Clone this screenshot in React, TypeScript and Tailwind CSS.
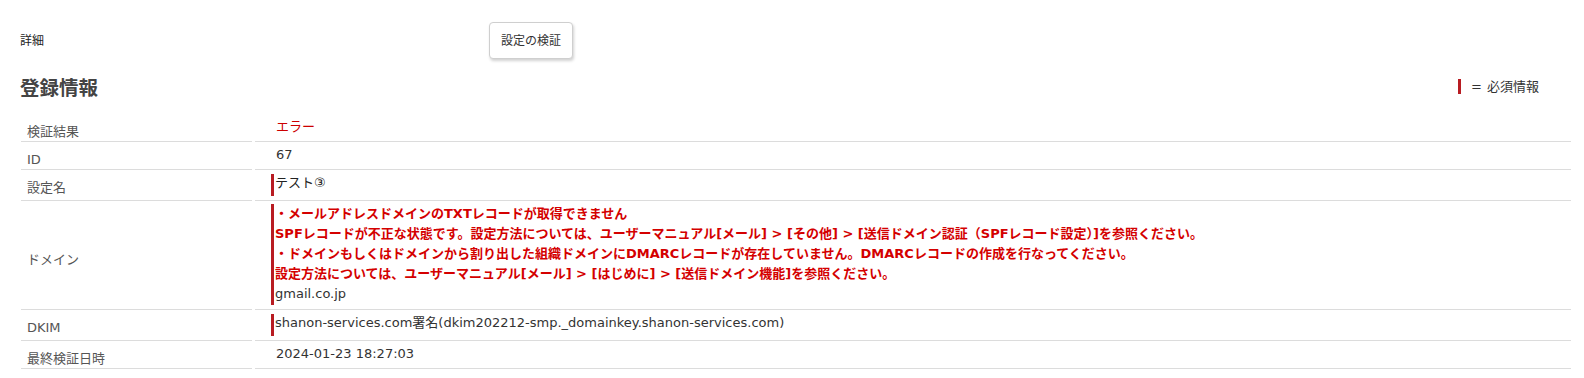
import React from "react";

const FONT = "font-['DejaVu_Sans','Noto_Sans_CJK_JP',sans-serif]";

function Row({
  label,
  children,
  center = false,
}: {
  label: string;
  children: React.ReactNode;
  center?: boolean;
}) {
  return (
    <>
      <div
        className={`border-b border-[#dcdcdc] pl-[6px] text-[#555] min-h-[28px] flex ${
          center ? "items-center" : "items-start"
        }`}
      >
        <div className="pt-[8px] leading-[19px]">{label}</div>
      </div>
      <div className="border-b border-[#dcdcdc] pl-[16px] pb-[4px] min-h-[28px] text-[#333]">
        {children}
      </div>
    </>
  );
}

function Plain({ children, className = "" }: { children: React.ReactNode; className?: string }) {
  return (
    <div className={`mt-[4px] border-l-[3px] border-transparent pl-[2px] leading-[18px] ${className}`}>
      {children}
    </div>
  );
}

function Req({ children }: { children: React.ReactNode }) {
  return (
    <div className="mt-[4px] border-l-[3px] border-[#b81c22] pl-[1px] leading-[18px]">
      {children}
    </div>
  );
}

export default function App() {
  return (
    <div className={`${FONT} text-[13px] bg-white w-[1584px] h-[378px] pl-[20px] pr-[13px]`}>
      {/* top row */}
      <div className="flex items-center pt-[22px]">
        <div className="w-[469px] text-[12px] text-[#222] leading-[16px]">詳細</div>
        <button className="h-[37px] px-[11px] bg-white border border-[#cfcfcf] rounded-[4px] shadow-[1px_2px_3px_rgba(0,0,0,0.18)] text-[12px] text-[#333]">
          設定の検証
        </button>
      </div>

      {/* heading row */}
      <div className="flex justify-between mt-[16px] h-[28px]">
        <h2 className="text-[19.5px] font-bold text-[#444] leading-[28px]">登録情報</h2>
        <div className="flex items-center self-start mt-[4px] pr-[32px] h-[15px] text-[13px] text-[#333] leading-[15px]">
          <span className="w-[3px] h-[15px] bg-[#b81c22]" />
          <span className="ml-[10px]">=</span>
          <span className="ml-[5px]">必須情報</span>
        </div>
      </div>

      {/* table */}
      <div className="mt-[11px] pl-[1px] grid grid-cols-[231px_1fr] gap-x-[3px]">
        <Row label="検証結果">
          <Plain className="text-[#cc0000]">エラー</Plain>
        </Row>
        <Row label="ID">
          <Plain>67</Plain>
        </Row>
        <Row label="設定名">
          <Req>
            <div className="pb-[4px] text-[#222]">テスト③</div>
          </Req>
        </Row>
        <Row label="ドメイン" center>
          <div className="mt-[5px] border-l-[3px] border-[#b81c22] pl-[1px] pb-[1px]">
            <div className="-mt-[2px] leading-[20px]">
              <div className="font-bold text-[#d40000]">
                ・メールアドレスドメインのTXTレコードが取得できません
              </div>
              <div className="font-bold text-[#d40000]">
                SPFレコードが不正な状態です。設定方法については、ユーザーマニュアル[メール] &gt; [その他] &gt; [送信ドメイン認証（SPFレコード設定）]を参照ください。
              </div>
              <div className="font-bold text-[#d40000]">
                ・ドメインもしくはドメインから割り出した組織ドメインにDMARCレコードが存在していません。DMARCレコードの作成を行なってください。
              </div>
              <div className="font-bold text-[#d40000]">
                設定方法については、ユーザーマニュアル[メール] &gt; [はじめに] &gt; [送信ドメイン機能]を参照ください。
              </div>
              <div className="text-[#333]">gmail.co.jp</div>
            </div>
          </div>
        </Row>
        <Row label="DKIM">
          <Req>
            <div className="pb-[4px] text-[#333]">
              shanon-services.com署名(dkim202212-smp._domainkey.shanon-services.com)
            </div>
          </Req>
        </Row>
        <Row label="最終検証日時">
          <Plain>2024-01-23 18:27:03</Plain>
        </Row>
      </div>
    </div>
  );
}
